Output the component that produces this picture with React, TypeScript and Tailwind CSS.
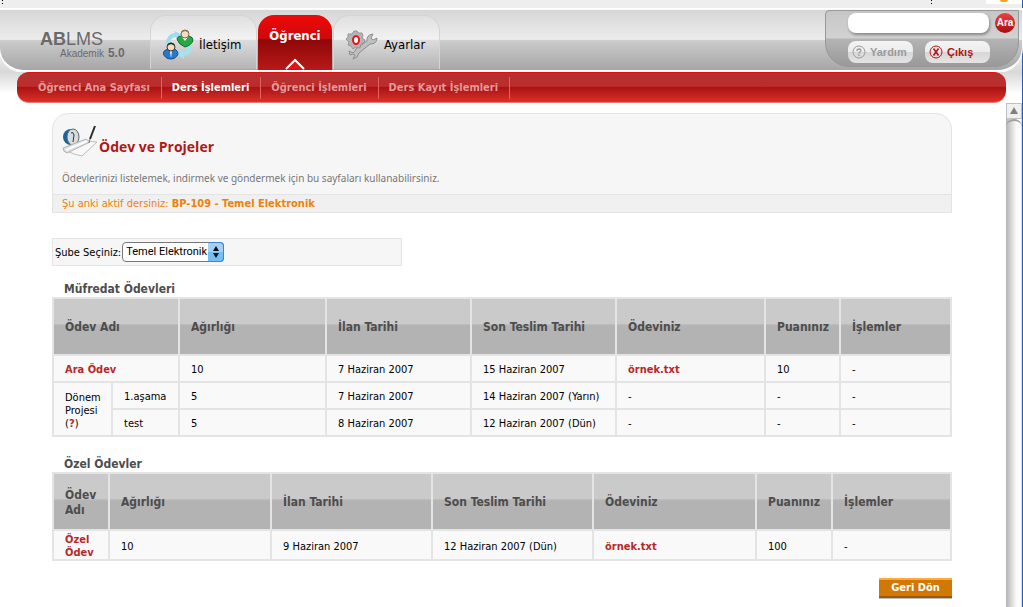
import React, { useState } from 'react';

const SUB_NAV = ['Öğrenci Ana Sayfası', 'Ders İşlemleri', 'Öğrenci İşlemleri', 'Ders Kayıt İşlemleri'];
const HEADERS = ['Ödev Adı', 'Ağırlığı', 'İlan Tarihi', 'Son Teslim Tarihi', 'Ödeviniz', 'Puanınız', 'İşlemler'];

const TAB = "flex h-[54px] w-[107px] items-center rounded-t-2xl border border-b-0 border-[#d4d4d4] bg-[linear-gradient(#e0e0e0,#f2f2f2_44%,#dcdcdc_46%,#b4b4b4)] pt-1 text-[13px] font-['DejaVu_Sans_Condensed','DejaVu_Sans',sans-serif]";
const PILL = "flex h-[22px] w-[65px] items-center gap-1 rounded-lg bg-[linear-gradient(#f4f4f4,#ececec_48%,#d6d6d6_50%,#e4e4e4)] pl-1 text-[11px] font-bold font-['Liberation_Sans',sans-serif]";
const HEAD_CELL = "border-2 border-[#e4e4e4] bg-[linear-gradient(#cacaca_45%,#bdbdbd_46%,#b3b3b3_49%)] pt-0.5 pr-2 pl-[11px] text-left text-xs leading-[15px] text-[#4d4d4d]";
const CELL = 'border-2 border-[#e4e4e4] bg-[#f9f9f9] pt-0.5 pr-1 pl-[11px] leading-[13px]';
const LINK = 'text-[#b82828] font-bold';

const PeopleIcon = () => (
  <svg width="32" height="32" viewBox="0 0 32 32" aria-hidden="true">
    <path d="M3 15 Q3 5 12 4 L11 2 L18 5 L14 11 L13 8 Q7 9 6 15Z" fill="#9adcf0" />
    <path d="M29 17 Q29 26 21 27 L21 30 L15 26 L20 20 L21 23 Q25 22 25 17Z" fill="#a5e2ee" />
    <path d="M14 10 Q15 7 18 7 H26 Q30 8 30 11 Q29 16 22 18 Q15 15 14 10Z" fill="#27a844" stroke="#126b28" />
    <path d="M19 8 L22 12 L25 8Z" fill="#fff" />
    <ellipse cx="22" cy="5" rx="4" ry="4" fill="#f3dcc0" stroke="#7d6546" />
    <path d="M18 4 Q22 -2 26 4 L22 2Z" fill="#94764e" />
    <path d="M0 24 Q1 21 5 20 H12 Q15 22 15 25 Q13 30 8 30 Q2 30 0 24Z" fill="#2878c8" stroke="#154c8f" />
    <path d="M7 22 L8 29 L9 22Z" fill="#fff" />
    <ellipse cx="8" cy="18" rx="4" ry="4" fill="#f3dcc0" stroke="#333" />
    <path d="M4 17 Q8 10 12 17 L8 15Z" fill="#222" />
  </svg>
);

const GearIcon = () => (
  <svg width="32" height="30" viewBox="0 0 32 30" aria-hidden="true">
    <path d="M3 21 L7 23 L9 21 L10 19 L21 11 Q20 5 27 4 L25 8 L27 10 L31 8 Q31 14 24 14 L13 23 Q12 28 7 29 L9 25 L7 24 L4 25Z" fill="#c0c0c0" stroke="#8c8c8c" />
    <path d="M8 1 L11 1 L12 3 L16 3 L17 6 L16 8 L19 10 L18 13 L15 14 L14 18 L10 17 L7 19 L5 16 L2 15 L3 12 L0 9 L2 7 L2 4 L6 4Z" fill="#b4b4b4" stroke="#969696" />
    <ellipse cx="10" cy="10" rx="3" ry="4" fill="#fff" stroke="#e8141c" strokeWidth="2" />
  </svg>
);

const ProjectIcon = () => (
  <svg width="36" height="33" viewBox="0 0 36 33" aria-hidden="true">
    <circle cx="9" cy="12" r="8" fill="#17639c" />
    <ellipse cx="11" cy="12" rx="6" ry="8" fill="#d8dcde" stroke="#5d6a72" />
    <path d="M9 8 Q11 6 12 10 L11 17" fill="none" stroke="#333" />
    <path d="M5 26 L26 16 L35 17 L20 31 L12 29Z" fill="#f8f8f8" stroke="#bdbdbd" />
    <path d="M1 23 L24 14 L28 17 L5 28 Q1 27 1 23Z" fill="#dedede" stroke="#b4b4b4" />
    <path d="M4 25 L25 16" stroke="#fff" strokeWidth="2" />
    <path d="M33 1 L28 14" stroke="#2c2c2c" strokeWidth="2" />
    <path d="M28 14 L27 18" stroke="#777" />
  </svg>
);

const PillIcon = ({ mark }: { mark: 'help' | 'exit' }) => (
  <svg width="14" height="14" viewBox="0 0 14 14" fill="none" stroke="currentColor" aria-hidden="true">
    <circle cx="7" cy="7" r="6" />
    {mark === 'help'
      ? <path d="M5 6 Q5 4 7 4 Q9 4 9 5.5 Q9 6.5 7 7.5 V8.5 M7 9.5 V11" strokeWidth="1.3" />
      : <path d="M4.5 3.5 L9.5 10.5 M9.5 3.5 L4.5 10.5" strokeWidth="1.6" />}
  </svg>
);

type TableProps = { title: string; widths: string[]; children: React.ReactNode; nameSpan?: number };

const HomeworkTable = ({ title, widths, children, nameSpan }: TableProps) => (
  <table className="w-full table-fixed border-collapse">
    <caption className="pl-3 text-left text-xs leading-4 font-bold text-[#4d4d4d]">{title}</caption>
    <colgroup>
      {widths.map((w, i) => <col key={i} className={w} />)}
    </colgroup>
    <thead>
      <tr className="h-[57px]">
        {HEADERS.map((h, i) => (
          <th key={h} scope="col" colSpan={i === 0 ? nameSpan : undefined} className={HEAD_CELL}>{h}</th>
        ))}
      </tr>
    </thead>
    <tbody>{children}</tbody>
  </table>
);

const Cells = ({ values }: { values: string[] }) => (
  <>
    {values.map((v, i) => (
      <td key={i} className={CELL}>
        {v.endsWith('.txt') ? <a href="#dosya" className={LINK}>{v}</a> : v}
      </td>
    ))}
  </>
);

const Header = () => {
  const [query, setQuery] = useState('');

  return (
    <div className="bg-[linear-gradient(#f0f0f0_70%,#d8d8d8)]">
      <header className="flex h-[63px] items-start justify-between rounded-b-[24px] border-t border-b-2 border-t-[#fafafa] border-b-white bg-[linear-gradient(#d6d6d6,#ececec_49%,#cbcbcb_51%,#a6a6a6)] shadow-[0_0_0_1px_#ffffff]">
        <div className="flex">
          <a href="#anasayfa" className="block w-[150px] pt-5 pl-10 font-['Liberation_Sans',sans-serif] text-[#6a6a6a]">
            <div className="text-lg leading-[18px]"><b>AB</b>LMS</div>
            <div className="flex items-baseline gap-1 pl-5 text-[10px] leading-[10px]">Akademik <b className="text-xs leading-[10px]">5.0</b></div>
          </a>
          <nav aria-label="Bölümler" className="flex gap-px pt-[5px]">
            <a href="#iletisim" className={TAB + ' gap-1 pl-3'}><PeopleIcon />İletişim</a>
            <a href="#ogrenci" className="flex h-[55px] w-[74px] flex-col items-center justify-between rounded-t-2xl bg-[linear-gradient(#f00808,#cc0a0a_43%,#8e0808_45%,#b81818)] pt-[13px] text-[13px] leading-4 font-bold text-white">
              Öğrenci
              <svg width="20" height="12" viewBox="0 0 20 12" aria-hidden="true">
                <path d="M1 11 L10 2 L19 11" fill="#e41414" stroke="#fff" strokeWidth="2" />
              </svg>
            </a>
            <a href="#ayarlar" className={TAB + ' gap-1.5 pl-3'}><GearIcon />Ayarlar</a>
          </nav>
        </div>

        <div className="mr-[3px] flex h-[57px] w-[194px] flex-col gap-2 rounded-tl rounded-br-3xl rounded-bl-3xl border border-[#989898] bg-[linear-gradient(#c6c6c6,#d2d2d2_49%,#b4b4b4_51%,#999999)] pt-0.5 pl-[22px]">
          <form className="flex items-center gap-1.5" onSubmit={e => e.preventDefault()}>
            <input
              aria-label="Ara"
              value={query}
              onChange={e => setQuery(e.target.value)}
              className="h-5 w-[141px] rounded-lg bg-white px-2 shadow-[1px_2px_3px_#888888] outline-none"
            />
            <button type="submit" className="h-5 w-5 rounded-full bg-[linear-gradient(#f04040,#a80c0c)] font-['Liberation_Sans',sans-serif] text-[10px] leading-5 font-bold whitespace-nowrap text-white">Ara</button>
          </form>
          <div className="flex gap-3">
            <button type="button" className={PILL + ' text-[#9b9b9b]'}><PillIcon mark="help" />Yardım</button>
            <button type="button" className={PILL + ' text-[#b01414]'}><PillIcon mark="exit" />Çıkış</button>
          </div>
        </div>
      </header>
    </div>
  );
};

export default function App() {
  const [branch, setBranch] = useState('Temel Elektronik');

  return (
    <div className="flex min-h-screen flex-col border-r border-[#1a5fc0] bg-white font-['DejaVu_Sans_Condensed','DejaVu_Sans',sans-serif] text-[11px] text-black">
      <div className="flex h-[9px] justify-between border-b border-[#c8c8c8] bg-[#eeeeee] pl-0.5">
        <span className="h-1 w-px border-y border-black" />
        <div className="flex gap-[54px]">
          <span className="h-1 w-px border-y border-black" />
          <span className="flex h-1 w-9 justify-center bg-white"><span className="h-0.5 w-2 rounded-b-full bg-[#f0a820]" /></span>
        </div>
      </div>

      <Header />

      {/* Sub menu */}
      <div className="bg-[linear-gradient(#d8d8d8,#ffffff_70%)] pr-4 pl-[17px]">
        <nav aria-label="Öğrenci menüsü" className="flex h-[31px] items-center rounded-xl border-t border-b border-t-[#e01010] border-b-[#e87a7a] bg-[linear-gradient(#b43232,#bd2c2c_46%,#a81414_50%,#dc302a)] pl-[11px] font-bold">
          {SUB_NAV.map((label, i) => (
            <a
              key={label}
              href="#menu"
              aria-current={i === 1 ? 'page' : undefined}
              className={'border-r border-[#e46060] pr-[11px] pl-2.5 leading-[22px] ' + (i === 1 ? 'text-white' : 'text-[#e39a9a]')}
            >
              {label}
            </a>
          ))}
        </nav>
      </div>

      <div className="flex flex-1">
        <main className="mr-[54px] ml-[52px] flex-1 pt-2.5 pb-2">
          <section className="rounded-t-2xl border border-[#e4e4e4] bg-[#f6f6f6]">
            <div className="px-[9px] pt-[11px] pb-2">
              <div className="flex items-end gap-px">
                <ProjectIcon />
                <h1 className="text-sm leading-[22px] font-bold text-[#b01818] font-['Open_Sans',sans-serif]">Ödev ve Projeler</h1>
              </div>
              <p className="pt-3 text-[10px] leading-4 text-[#777777] font-['Noto_Sans',sans-serif]">Ödevlerinizi listelemek, indirmek ve göndermek için bu sayfaları kullanabilirsiniz.</p>
            </div>
            <p className="border-t border-[#e4e4e4] bg-[#f0f0f0] px-[9px] leading-[17px] text-[#ee8208]">
              Şu anki aktif dersiniz: <b>BP-109 - Temel Elektronik</b>
            </p>
          </section>

          <div className="mt-[25px] flex h-7 w-[350px] items-center gap-px border border-[#e4e4e4] bg-[#f6f6f6] pl-0.5">
            <label htmlFor="sube" className="pt-0.5">Şube Seçiniz:</label>
            <div className="relative">
              <select
                id="sube"
                value={branch}
                onChange={e => setBranch(e.target.value)}
                className="block h-5 w-[102px] appearance-none rounded border border-[#777777] bg-white pl-[3px] font-['Roboto',sans-serif]"
              >
                <option>Temel Elektronik</option>
              </select>
              <svg className="pointer-events-none absolute top-0 right-0" width="16" height="20" viewBox="0 0 16 20" aria-hidden="true">
                <path d="M0 0 H12 Q16 0 16 4 V16 Q16 20 12 20 H0Z" fill="#3d86cc" />
                <path d="M0 1 H12 Q15 1 15 5 V10 H0Z" fill="#a5d0f4" />
                <path d="M0 10 H15 V15 Q15 19 12 19 H0Z" fill="#74bff5" />
                <path d="M5 9 L8 4 L11 9Z M5 11 L8 16 L11 11Z" fill="#111" />
              </svg>
            </div>
          </div>

          <div className="mt-[15px] flex flex-col gap-[19px]">
            <HomeworkTable title="Müfredat Ödevleri" nameSpan={2} widths={['w-[59px]', 'w-[67px]', 'w-[147px]', 'w-[145px]', 'w-[145px]', 'w-[149px]', 'w-[75px]', '']}>
              <tr className="h-[27px]">
                <td colSpan={2} className={CELL}><a href="#ara-odev" className={LINK}>Ara Ödev</a></td>
                <Cells values={['10', '7 Haziran 2007', '15 Haziran 2007', 'örnek.txt', '10', '-']} />
              </tr>
              <tr className="h-[27px]">
                <td rowSpan={2} className={CELL}>Dönem Projesi (<a href="#proje" className={LINK}>?</a>)</td>
                <Cells values={['1.aşama', '5', '7 Haziran 2007', '14 Haziran 2007 (Yarın)', '-', '-', '-']} />
              </tr>
              <tr className="h-[27px]">
                <Cells values={['test', '5', '8 Haziran 2007', '12 Haziran 2007 (Dün)', '-', '-', '-']} />
              </tr>
            </HomeworkTable>

            <HomeworkTable title="Özel Ödevler" widths={['w-[56px]', 'w-[162px]', 'w-[161px]', 'w-[161px]', 'w-[163px]', 'w-[76px]', '']}>
              <tr className="h-[30px]">
                <td className={CELL}><a href="#ozel-odev" className={LINK}>Özel Ödev</a></td>
                <Cells values={['10', '9 Haziran 2007', '12 Haziran 2007 (Dün)', 'örnek.txt', '100', '-']} />
              </tr>
            </HomeworkTable>
          </div>

          <div className="mt-[17px] flex justify-end">
            <button type="button" className="h-5 w-[73px] border-t-2 border-b-2 border-t-[#ffaa40] border-b-[#a05800] bg-[#d07800] font-bold text-white shadow-[0_1px_0_#bbbbbb]">Geri Dön</button>
          </div>
        </main>

        {/* Scroll bar */}
        <div className="flex w-4 flex-col bg-[linear-gradient(90deg,#b4b4b4,#fafafa_65%,#ffffff_90%,#d0d0d0)]" aria-hidden="true">
          <div className="flex h-4 items-center justify-center border border-[#c0c0c0] bg-[#f0f0f0]">
            <svg width="8" height="8" viewBox="0 0 8 8"><path d="M0 7 L4 0 L8 7Z" fill="#808080" /></svg>
          </div>
          <div className="flex-1 rounded-t-full border-t-2 border-[#a0a0a0]" />
        </div>
      </div>
    </div>
  );
}
